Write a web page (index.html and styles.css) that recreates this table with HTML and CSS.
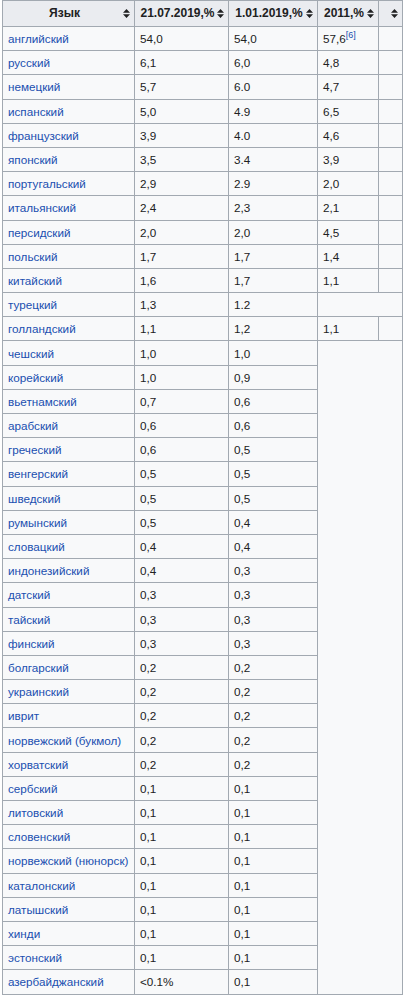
FILE: index.html
```html
<!DOCTYPE html>
<html lang="ru">
<head>
    <meta charset="UTF-8">
    <meta name="viewport" content="width=device-width, initial-scale=1.0">
    <title>Языки интернета</title>
    <link rel="stylesheet" href="styles.css">
</head>
<body>
    <table class="wikitable">
        <colgroup>
            <col class="c-lang">
            <col class="c-a">
            <col class="c-b">
            <col class="c-c">
            <col class="c-d">
        </colgroup>
        <thead>
            <tr>
                <th><svg class="sort" viewBox="0 0 7 9"><path d="M3.5 0L7 3.8H0z M3.5 9L0 5.2H7z"/></svg>Язык</th>
                <th><svg class="sort" viewBox="0 0 7 9"><path d="M3.5 0L7 3.8H0z M3.5 9L0 5.2H7z"/></svg>21.07.2019,%</th>
                <th><svg class="sort" viewBox="0 0 7 9"><path d="M3.5 0L7 3.8H0z M3.5 9L0 5.2H7z"/></svg>1.01.2019,%</th>
                <th><svg class="sort" viewBox="0 0 7 9"><path d="M3.5 0L7 3.8H0z M3.5 9L0 5.2H7z"/></svg>2011,%</th>
                <th>&nbsp;<svg class="sort" viewBox="0 0 7 9"><path d="M3.5 0L7 3.8H0z M3.5 9L0 5.2H7z"/></svg></th>
            </tr>
        </thead>
        <tbody>
            <tr><td><a href="#">английский</a></td><td>54,0</td><td>54,0</td><td>57,6<sup><a href="#">[6]</a></sup></td><td></td></tr>
            <tr><td><a href="#">русский</a></td><td>6,1</td><td>6,0</td><td>4,8</td><td></td></tr>
            <tr><td><a href="#">немецкий</a></td><td>5,7</td><td>6.0</td><td>4,7</td><td></td></tr>
            <tr><td><a href="#">испанский</a></td><td>5,0</td><td>4.9</td><td>6,5</td><td></td></tr>
            <tr><td><a href="#">французский</a></td><td>3,9</td><td>4.0</td><td>4,6</td><td></td></tr>
            <tr><td><a href="#">японский</a></td><td>3,5</td><td>3.4</td><td>3,9</td><td></td></tr>
            <tr><td><a href="#">португальский</a></td><td>2,9</td><td>2.9</td><td>2,0</td><td></td></tr>
            <tr><td><a href="#">итальянский</a></td><td>2,4</td><td>2,3</td><td>2,1</td><td></td></tr>
            <tr><td><a href="#">персидский</a></td><td>2,0</td><td>2,0</td><td>4,5</td><td></td></tr>
            <tr><td><a href="#">польский</a></td><td>1,7</td><td>1,7</td><td>1,4</td><td></td></tr>
            <tr><td><a href="#">китайский</a></td><td>1,6</td><td>1,7</td><td>1,1</td><td></td></tr>
            <tr><td><a href="#">турецкий</a></td><td>1,3</td><td>1.2</td><td colspan="2"></td></tr>
            <tr><td><a href="#">голландский</a></td><td>1,1</td><td>1,2</td><td>1,1</td><td></td></tr>
            <tr><td><a href="#">чешский</a></td><td>1,0</td><td>1,0</td><td colspan="2" rowspan="27"></td></tr>
            <tr><td><a href="#">корейский</a></td><td>1,0</td><td>0,9</td></tr>
            <tr><td><a href="#">вьетнамский</a></td><td>0,7</td><td>0,6</td></tr>
            <tr><td><a href="#">арабский</a></td><td>0,6</td><td>0,6</td></tr>
            <tr><td><a href="#">греческий</a></td><td>0,6</td><td>0,5</td></tr>
            <tr><td><a href="#">венгерский</a></td><td>0,5</td><td>0,5</td></tr>
            <tr><td><a href="#">шведский</a></td><td>0,5</td><td>0,5</td></tr>
            <tr><td><a href="#">румынский</a></td><td>0,5</td><td>0,4</td></tr>
            <tr><td><a href="#">словацкий</a></td><td>0,4</td><td>0,4</td></tr>
            <tr><td><a href="#">индонезийский</a></td><td>0,4</td><td>0,3</td></tr>
            <tr><td><a href="#">датский</a></td><td>0,3</td><td>0,3</td></tr>
            <tr><td><a href="#">тайский</a></td><td>0,3</td><td>0,3</td></tr>
            <tr><td><a href="#">финский</a></td><td>0,3</td><td>0,3</td></tr>
            <tr><td><a href="#">болгарский</a></td><td>0,2</td><td>0,2</td></tr>
            <tr><td><a href="#">украинский</a></td><td>0,2</td><td>0,2</td></tr>
            <tr><td><a href="#">иврит</a></td><td>0,2</td><td>0,2</td></tr>
            <tr><td><a href="#">норвежский (букмол)</a></td><td>0,2</td><td>0,2</td></tr>
            <tr><td><a href="#">хорватский</a></td><td>0,2</td><td>0,2</td></tr>
            <tr><td><a href="#">сербский</a></td><td>0,1</td><td>0,1</td></tr>
            <tr><td><a href="#">литовский</a></td><td>0,1</td><td>0,1</td></tr>
            <tr><td><a href="#">словенский</a></td><td>0,1</td><td>0,1</td></tr>
            <tr><td><a href="#">норвежский (нюнорск)</a></td><td>0,1</td><td>0,1</td></tr>
            <tr><td><a href="#">каталонский</a></td><td>0,1</td><td>0,1</td></tr>
            <tr><td><a href="#">латышский</a></td><td>0,1</td><td>0,1</td></tr>
            <tr><td><a href="#">хинди</a></td><td>0,1</td><td>0,1</td></tr>
            <tr><td><a href="#">эстонский</a></td><td>0,1</td><td>0,1</td></tr>
            <tr><td><a href="#">азербайджанский</a></td><td>&lt;0.1%</td><td>0,1</td></tr>
        </tbody>
    </table>
</body>
</html>
```

FILE: styles.css
```css
body {
    margin: 0;
    padding: 0 2px;
    background: #fff;
    font-family: 'Liberation Sans', Arial, sans-serif;
    font-size: 11.7px;
    color: #202122;
}

.wikitable {
    width: 400px;
    table-layout: fixed;
    border-collapse: collapse;
    background: #f8f9fa;
    border: 1px solid #a2a9b1;
}

.c-lang { width: 132px; }
.c-a { width: 94px; }
.c-b { width: 89px; }
.c-c { width: 61px; }
.c-d { width: 24px; }

.wikitable th,
.wikitable td {
    border: 1px solid #a2a9b1;
    padding: 0 5px;
    text-align: left;
    line-height: 15px;
    white-space: nowrap;
}

.wikitable tbody tr {
    height: 24.2px;
}

.wikitable th {
    height: 25px;
    padding-right: 4px;
    background: #eaecf0;
    font-weight: bold;
    font-size: 12px;
    text-align: center;
}

.sort {
    float: right;
    width: 7px;
    height: 9px;
    margin: 3px 0 0 2px;
    fill: #202122;
}

.wikitable td a,
.wikitable sup a {
    color: #1a4fb0;
    text-decoration: none;
}

.wikitable td:empty {
    padding: 0;
}

sup {
    font-size: 9px;
    line-height: 0;
    vertical-align: 5px;
}
```
